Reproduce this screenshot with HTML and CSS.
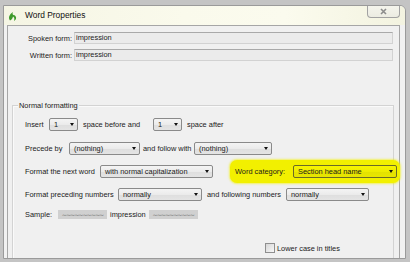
FILE: index.html
```html
<!DOCTYPE html>
<html>
<head>
<meta charset="utf-8">
<link rel="stylesheet" href="styles.css">
</head>
<body>
<div class="window">
  <div class="titlebar">
    <svg class="app-icon" width="9" height="9" viewBox="0 0 9 9"><path d="M2 8.5 C0 6 1 2.5 5 0 C4 2 4.6 3 6.6 3.2 C9 4.8 8.4 8 6 8.8 C6.8 6.5 6.2 5.3 5 4.6 C4.6 6.4 4 7.6 2 8.5Z" fill="#3f9b2c"/></svg>
    <span class="title">Word Properties</span>
    <div class="close"><svg width="7" height="7" viewBox="0 0 7 7"><path d="M1 1 L6 6 M6 1 L1 6" stroke="#8c8c8c" stroke-width="1.6"/></svg></div>
  </div>
  <div class="frame">
    <div class="content">
      <div class="form-row">
        <span class="form-label">Spoken form:</span>
        <div class="textbox">impression</div>
      </div>
      <div class="form-row second">
        <span class="form-label">Written form:</span>
        <div class="textbox">impression</div>
      </div>
      <div class="group">
        <div class="group-title">Normal formatting</div>
        <div class="row r1">
          <span class="lbl w-insert">Insert</span>
          <div class="combo w-num"><span>1</span></div>
          <span class="lbl w-before">space before and</span>
          <div class="combo w-num"><span>1</span></div>
          <span class="lbl gap5">space after</span>
        </div>
        <div class="row r2">
          <span class="lbl w-precede">Precede by</span>
          <div class="combo w-nothing1"><span>(nothing)</span></div>
          <span class="lbl w-follow">and follow with</span>
          <div class="combo w-nothing2"><span>(nothing)</span></div>
        </div>
        <div class="row r3">
          <span class="lbl w-format">Format the next word</span>
          <div class="combo w-cap"><span>with normal capitalization</span></div>
          <div class="highlight">
            <span class="lbl w-category">Word category:</span>
            <div class="combo yellow w-section"><span>Section head name</span></div>
          </div>
        </div>
        <div class="row r4">
          <span class="lbl w-preceding">Format preceding numbers</span>
          <div class="combo w-normal1"><span>normally</span></div>
          <span class="lbl w-following">and following numbers</span>
          <div class="combo w-normal2"><span>normally</span></div>
        </div>
        <div class="row r5">
          <span class="lbl w-sample">Sample:</span>
          <div class="sample-box"><span>~~~~~~~~~~</span></div>
          <span class="lbl sample-word">impression</span>
          <div class="sample-box"><span>~~~~~~~~~~</span></div>
        </div>
        <div class="row r6">
          <div class="checkbox"></div>
          <span class="lbl check-label">Lower case in titles</span>
        </div>
      </div>
    </div>
  </div>
</div>
</body>
</html>
```
FILE: styles.css
```css
html, body {
  margin: 0;
  padding: 0;
}
body {
  width: 410px;
  height: 262px;
  overflow: hidden;
  background: #c4c4c4;
  font-family: "Liberation Sans", Arial, sans-serif;
  font-size: 7.4px;
  color: #1a1a1a;
}
.window {
  box-sizing: border-box;
  margin: 5px 0 0 3px;
  width: 403px;
  height: 254px;
  border: 1px solid #9a9a9a;
  border-top-right-radius: 6px;
  background: #efefef;
  display: flex;
  flex-direction: column;
  overflow: hidden;
}
.titlebar {
  height: 19px;
  flex: none;
  display: flex;
  align-items: flex-start;
  background: linear-gradient(90deg, #f5f5e4 0%, #fafaec 45%, #fbfbee 70%, #f3f3e0 100%);
}
.app-icon {
  margin: 6px 0 0 4px;
  flex: none;
}
.title {
  margin: 4px 0 0 8px;
  font-size: 8.4px;
  color: #111;
  line-height: 10px;
}
.close {
  margin-left: auto;
  margin-right: 5px;
  width: 33px;
  height: 12px;
  box-sizing: border-box;
  border: 1px solid #a2a2a2;
  border-top: none;
  border-radius: 0 0 4px 4px;
  background: linear-gradient(#f4f4ec, #ecece2);
  display: flex;
  align-items: center;
  justify-content: center;
}
.frame {
  flex: 1;
  display: flex;
  padding: 0 5px 0 3px;
  background: #f1f1f1;
}
.content {
  flex: 1;
  border: 1px solid #a6a6a6;
  border-bottom: none;
  background: #f0f0f0;
  display: flex;
  flex-direction: column;
}
.form-row {
  display: flex;
  align-items: center;
  height: 12px;
  margin-top: 6px;
}
.form-row.second {
  margin-top: 5px;
}
.form-label {
  width: 64px;
  text-align: right;
  flex: none;
}
.textbox {
  margin-left: 2px;
  width: 319px;
  height: 12px;
  box-sizing: border-box;
  border: 1px solid #d2d2d2;
  border-top-color: #a9a9a9;
  background: #ebebeb;
  padding-left: 1px;
  line-height: 10px;
  color: #1a1a1a;
}
.group {
  margin: 44px 0 0 4px;
  width: 382px;
  box-sizing: border-box;
  border: 1px solid #d3d3d3;
  border-bottom: none;
  box-shadow: inset 1px 1px 0 #fafafa;
  padding-left: 12px;
  flex: 1;
}
.group-title {
  margin: -5px 0 0 -7px;
  height: 10px;
  line-height: 10px;
  padding: 0 1px;
  background: #f0f0f0;
  width: fit-content;
}
.row {
  display: flex;
  align-items: center;
  white-space: nowrap;
}
.r1 { margin-top: 1px; height: 24px; }
.r2 { height: 24px; }
.r3 { height: 23px; }
.r4 { height: 22px; }
.r5 { height: 18px; }
.r6 { margin-top: 20px; height: 10px; }
.lbl { flex: none; }
.w-insert { width: 24px; }
.w-before { width: 70px; margin-left: 5px; }
.gap5 { margin-left: 5px; }
.w-precede { width: 44px; }
.w-follow { width: 51px; margin-left: 3px; }
.w-format { width: 75px; }
.w-category { width: 58px; }
.w-preceding { width: 93px; }
.w-following { width: 79px; margin-left: 5px; }
.w-sample { width: 33px; }
.combo {
  flex: none;
  height: 13px;
  box-sizing: border-box;
  border: 1px solid #8a8a8a;
  border-radius: 2px;
  background: linear-gradient(#f4f4f4 0%, #ebebeb 50%, #dedede 51%, #e4e4e4 100%);
  display: flex;
  align-items: center;
  padding: 0 3px 0 4px;
  overflow: hidden;
}
.combo::after {
  content: "";
  margin-left: auto;
  flex: none;
  width: 0;
  height: 0;
  border-left: 2.5px solid transparent;
  border-right: 2.5px solid transparent;
  border-top: 3px solid #111;
}
.w-num { width: 29px; }
.w-nothing1 { width: 71px; }
.w-nothing2 { width: 78px; }
.w-cap { width: 113px; }
.w-section { width: 104px; }
.w-normal1 { width: 84px; }
.w-normal2 { width: 83px; }
.highlight {
  margin-left: 17px;
  width: 170px;
  height: 23px;
  box-sizing: border-box;
  padding-left: 5px;
  display: flex;
  align-items: center;
  background: #f2f000;
  border-radius: 7px;
  box-shadow: 0 0 2px 1px rgba(242, 240, 0, 0.6);
  flex: none;
}
.combo.yellow {
  border-color: #6a6a28;
  background: linear-gradient(#f6f400 0%, #eeec00 50%, #e4e200 51%, #e8e600 100%);
}
.sample-box {
  flex: none;
  width: 49px;
  height: 9px;
  background: #d0d0d0;
  color: #6e6e6e;
  font-family: "DejaVu Sans", sans-serif;
  font-size: 6px;
  line-height: 9px;
  letter-spacing: -0.9px;
  display: flex;
  justify-content: center;
  white-space: nowrap;
}
.sample-word {
  margin: 0 3px;
}
.checkbox {
  margin-left: 240px;
  width: 10px;
  height: 10px;
  box-sizing: border-box;
  border: 1px solid #8f8f8f;
  background: linear-gradient(135deg, #d6d6d6, #f8f8f8);
  flex: none;
}
.check-label {
  margin-left: 2px;
}
```
